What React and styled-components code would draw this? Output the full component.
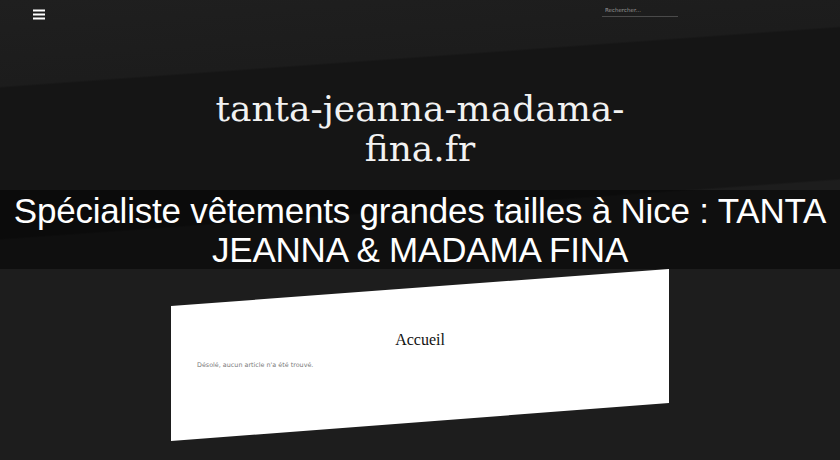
import React from "react";
import styled, { createGlobalStyle } from "styled-components";

const GlobalStyle = createGlobalStyle`
  html, body {
    margin: 0;
    padding: 0;
    background: #1d1d1d;
    overflow: hidden;
  }
  * {
    box-sizing: border-box;
  }
`;

const Page = styled.div`
  width: 840px;
  height: 460px;
  background: #1d1d1d;
`;

/* slanted dark band: upper edge (0,88)->(840,28), lower edge 152px below */
const Masthead = styled.header`
  height: 269px;
  background: linear-gradient(
    175.9deg,
    #1f1f1f 0,
    #1c1c1c 86px,
    #151515 88px,
    #151515 238px,
    #1d1d1d 240px
  );
  display: flex;
  flex-direction: column;
`;

const TopBar = styled.div`
  height: 28px;
  display: flex;
  justify-content: space-between;
  align-items: flex-start;
  padding: 0 162px 0 33px;
`;

const MenuButton = styled.button`
  margin-top: 9px;
  width: 12px;
  height: 11px;
  padding: 0;
  border: none;
  background: none;
  display: flex;
  cursor: pointer;
`;

const Search = styled.input`
  margin-top: 5px;
  width: 76px;
  height: 12px;
  padding: 0 0 1px 3px;
  border: none;
  border-bottom: 1px solid #4a4a4a;
  background: transparent;
  color: #ccc;
  font-family: "DejaVu Sans", sans-serif;
  font-size: 5.5px;
  outline: none;

  &::placeholder {
    color: #9a9a9a;
  }
`;

const SiteTitle = styled.h1`
  margin: 61px auto 0;
  height: 101px;
  max-width: 440px;
  text-align: center;
  font-family: "DejaVu Serif", serif;
  font-weight: normal;
  font-size: 36px;
  line-height: 40px;
  color: #f2f2f2;
`;

const Tagline = styled.div`
  height: 79px;
  background: rgba(0, 0, 0, 0.45);
  display: flex;
  align-items: center;
  justify-content: center;
  text-align: center;
  padding: 0 4px;
`;

const TaglineText = styled.h2`
  margin: 0;
  font-family: "Liberation Sans", Arial, sans-serif;
  font-weight: normal;
  font-size: 35px;
  line-height: 39px;
  letter-spacing: -0.2px;
  color: #ffffff;
`;

const Card = styled.section`
  width: 498px;
  height: 172px;
  margin: 0 auto;
  background: #ffffff;
  clip-path: polygon(0 37px, 100% 0, 100% 134px, 0 100%);
  padding: 62px 26px 0;
`;

const CardTitle = styled.h3`
  margin: 0;
  text-align: center;
  font-family: "Liberation Serif", serif;
  font-weight: normal;
  font-size: 16px;
  line-height: 18px;
  color: #111;
`;

const Empty = styled.p`
  margin: 12px 0 0;
  font-family: "DejaVu Sans", sans-serif;
  font-size: 6.4px;
  color: #7a7a7a;
`;

const MenuIcon = () => (
  <svg width="12" height="11" viewBox="0 0 12 11">
    <rect x="0" y="0.5" width="12" height="2" fill="#fff" />
    <rect x="0" y="4.5" width="12" height="2" fill="#fff" />
    <rect x="0" y="8.5" width="12" height="2" fill="#fff" />
  </svg>
);

export default function App() {
  return (
    <Page>
      <GlobalStyle />
      <Masthead>
        <TopBar>
          <MenuButton aria-label="Menu">
            <MenuIcon />
          </MenuButton>
          <Search type="text" placeholder="Rechercher..." />
        </TopBar>
        <SiteTitle>tanta-jeanna-madama-fina.fr</SiteTitle>
        <Tagline>
          <TaglineText>
            Spécialiste vêtements grandes tailles à Nice : TANTA JEANNA &amp; MADAMA FINA
          </TaglineText>
        </Tagline>
      </Masthead>
      <Card>
        <CardTitle>Accueil</CardTitle>
        <Empty>Désolé, aucun article n'a été trouvé.</Empty>
      </Card>
    </Page>
  );
}
